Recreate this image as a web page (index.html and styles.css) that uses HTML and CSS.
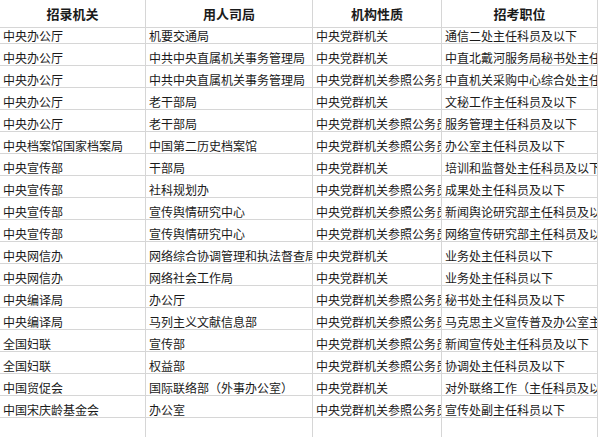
FILE: index.html
```html
<!DOCTYPE html>
<html lang="zh-CN">
<head>
<meta charset="utf-8">
<title>招录表</title>
<link rel="stylesheet" href="styles.css">
</head>
<body>
<div class="sheet">
  <div class="cell head">招录机关</div><div class="cell head">用人司局</div><div class="cell head">机构性质</div><div class="cell head">招考职位</div>

  <div class="cell">中央办公厅</div><div class="cell">机要交通局</div><div class="cell">中央党群机关</div><div class="cell">通信二处主任科员及以下</div>
  <div class="cell">中央办公厅</div><div class="cell">中共中央直属机关事务管理局</div><div class="cell">中央党群机关</div><div class="cell">中直北戴河服务局秘书处主任</div>
  <div class="cell">中央办公厅</div><div class="cell">中共中央直属机关事务管理局</div><div class="cell">中央党群机关参照公务员</div><div class="cell">中直机关采购中心综合处主任</div>
  <div class="cell">中央办公厅</div><div class="cell">老干部局</div><div class="cell">中央党群机关</div><div class="cell">文秘工作主任科员及以下</div>
  <div class="cell">中央办公厅</div><div class="cell">老干部局</div><div class="cell">中央党群机关参照公务员</div><div class="cell">服务管理主任科员及以下</div>
  <div class="cell">中央档案馆国家档案局</div><div class="cell">中国第二历史档案馆</div><div class="cell">中央党群机关参照公务员</div><div class="cell">办公室主任科员及以下</div>
  <div class="cell">中央宣传部</div><div class="cell">干部局</div><div class="cell">中央党群机关</div><div class="cell">培训和监督处主任科员及以下</div>
  <div class="cell">中央宣传部</div><div class="cell">社科规划办</div><div class="cell">中央党群机关参照公务员</div><div class="cell">成果处主任科员及以下</div>
  <div class="cell">中央宣传部</div><div class="cell">宣传舆情研究中心</div><div class="cell">中央党群机关参照公务员</div><div class="cell">新闻舆论研究部主任科员及以</div>
  <div class="cell">中央宣传部</div><div class="cell">宣传舆情研究中心</div><div class="cell">中央党群机关参照公务员</div><div class="cell">网络宣传研究部主任科员及以</div>
  <div class="cell">中央网信办</div><div class="cell">网络综合协调管理和执法督查局</div><div class="cell">中央党群机关</div><div class="cell">业务处主任科员以下</div>
  <div class="cell">中央网信办</div><div class="cell">网络社会工作局</div><div class="cell">中央党群机关</div><div class="cell">业务处主任科员以下</div>
  <div class="cell">中央编译局</div><div class="cell">办公厅</div><div class="cell">中央党群机关参照公务员</div><div class="cell">秘书处主任科员及以下</div>
  <div class="cell">中央编译局</div><div class="cell">马列主义文献信息部</div><div class="cell">中央党群机关参照公务员</div><div class="cell">马克思主义宣传普及办公室主</div>
  <div class="cell">全国妇联</div><div class="cell">宣传部</div><div class="cell">中央党群机关参照公务员</div><div class="cell">新闻宣传处主任科员及以下</div>
  <div class="cell">全国妇联</div><div class="cell">权益部</div><div class="cell">中央党群机关参照公务员</div><div class="cell">协调处主任科员及以下</div>
  <div class="cell">中国贸促会</div><div class="cell">国际联络部（外事办公室）</div><div class="cell">中央党群机关</div><div class="cell">对外联络工作（主任科员及以</div>
  <div class="cell">中国宋庆龄基金会</div><div class="cell">办公室</div><div class="cell">中央党群机关参照公务员</div><div class="cell">宣传处副主任科员以下</div>

  <div class="cell empty"></div><div class="cell empty"></div><div class="cell empty"></div><div class="cell empty"></div>
</div>
</body>
</html>
```

FILE: styles.css
```css
html, body {
  margin: 0;
  padding: 0;
  background: #ffffff;
}

body {
  width: 600px;
  height: 437px;
  overflow: hidden;
  font-family: "Noto Sans CJK SC", "Noto Sans", sans-serif;
  color: #1a1a1a;
}

.sheet {
  display: grid;
  grid-template-columns: 146px 167px 129px 156px;
  grid-auto-rows: 22px;
}

.cell {
  box-sizing: border-box;
  border-right: 1px solid #d6d6d6;
  border-bottom: 1px solid #d6d6d6;
  font-size: 12px;
  line-height: 14px;
  padding: 7px 0 0 3px;
  white-space: nowrap;
  overflow: hidden;
}

.head {
  height: 28px;
  font-size: 13px;
  font-weight: bold;
  line-height: 27px;
  padding: 0;
  text-align: center;
}

.empty {
  height: 22px;
}
```
